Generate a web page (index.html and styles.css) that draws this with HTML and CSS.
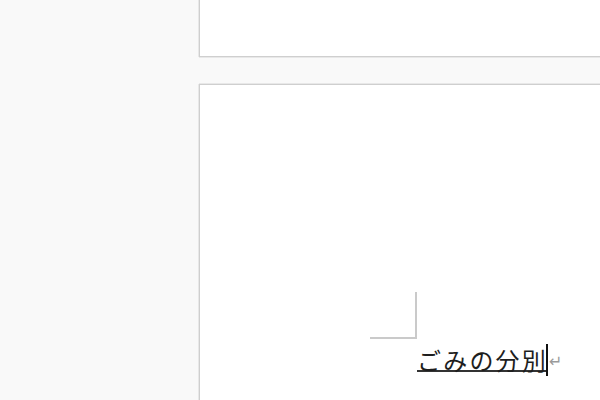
FILE: index.html
```html
<!DOCTYPE html>
<html lang="ja">
<head>
<meta charset="utf-8">
<link rel="stylesheet" href="styles.css">
</head>
<body>
<div class="workspace">
  <div class="page page-prev"></div>
  <div class="page page-current">
    <div class="crop-mark"></div>
    <div class="line">
      <span class="text">ごみの分別</span><span class="caret"></span><span class="para-mark">↵</span>
    </div>
  </div>
</div>
</body>
</html>
```
FILE: styles.css
```css
html, body {
  margin: 0;
  padding: 0;
  width: 600px;
  height: 400px;
  overflow: hidden;
  background: #f9f9f9;
}
.workspace {
  display: flex;
  flex-direction: column;
  gap: 27px;
  padding-left: 199px;
  height: 400px;
  box-sizing: border-box;
  overflow: hidden;
}
.page {
  flex: none;
  width: 401px;
  box-sizing: border-box;
  background: #ffffff;
  border: 1px solid #cfcfcf;
  border-right: none;
  box-shadow: -1px 0 0 #e8e8e8, 0 1px 0 #e8e8e8, 0 -1px 0 #e8e8e8;
}
.page-prev {
  height: 57px;
  border-top: none;
}
.page-current {
  height: 316px;
  border-bottom: none;
  padding-top: 207px;
}
.crop-mark {
  margin-left: 170px;
  width: 45px;
  height: 45px;
  border-right: 2px solid #cacaca;
  border-bottom: 2px solid #cacaca;
}
.line {
  display: flex;
  align-items: center;
  margin-left: 217px;
  margin-top: 4px;
  height: 34px;
  font-family: "Noto Sans CJK JP", sans-serif;
  font-size: 24px;
  color: #1e1e1e;
}
.text {
  letter-spacing: 2.2px;
  text-decoration: underline;
  text-decoration-thickness: 2px;
  text-underline-offset: 0px;
  text-decoration-color: #333;
  line-height: 30px;
}
.caret {
  display: inline-block;
  width: 2px;
  height: 32px;
  background: #111;
  margin-left: -2px;
}
.para-mark {
  font-family: "DejaVu Sans", sans-serif;
  font-size: 16px;
  color: #9a9a9a;
  margin-left: 1px;
  margin-top: 2px;
}
```
